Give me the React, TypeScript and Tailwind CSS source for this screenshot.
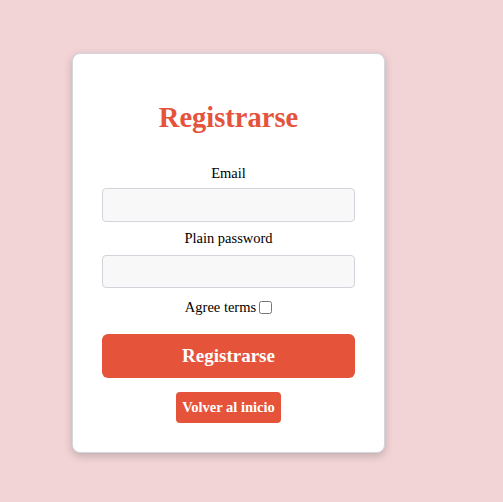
export default function App() {
  return (
    <div className="min-h-[502px] bg-[#f2d4d6] pt-[53px] pl-[72px]" style={{ fontFamily: '"Liberation Serif", serif' }}>
      <div className="w-[313px] rounded-lg border border-[#d3d6dc] bg-white px-[29px] pt-[40px] pb-[29px] shadow-[0_3px_8px_rgba(0,0,0,0.2)] flex flex-col items-center text-black">
        <h1 className="text-[28.5px] leading-[32px] font-bold text-[#e5533d] mt-[8px] mb-[30px]">Registrarse</h1>
        <label className="text-[14.5px] leading-[18px] mb-[6px]">Email</label>
        <input className="w-full h-[34px] rounded border border-[#d1d5db] bg-[#f8f8f9]" />
        <label className="text-[14.5px] leading-[18px] mt-[7px] mb-[8px]">Plain password</label>
        <input type="password" className="w-full h-[33px] rounded border border-[#d1d5db] bg-[#f8f8f9]" />
        <div className="flex items-center gap-[3px] mt-[10px] text-[14.5px] leading-[18px]">
          <span>Agree terms</span>
          <input type="checkbox" className="w-[13px] h-[13px]" />
        </div>
        <button className="w-full h-[44px] mt-[18px] rounded-md bg-[#e5533b] text-white text-[19px] font-bold">Registrarse</button>
        <button className="mt-[14px] h-[31px] px-[6px] rounded bg-[#e5533b] text-white text-[14.5px] font-bold">Volver al inicio</button>
      </div>
    </div>
  );
}
